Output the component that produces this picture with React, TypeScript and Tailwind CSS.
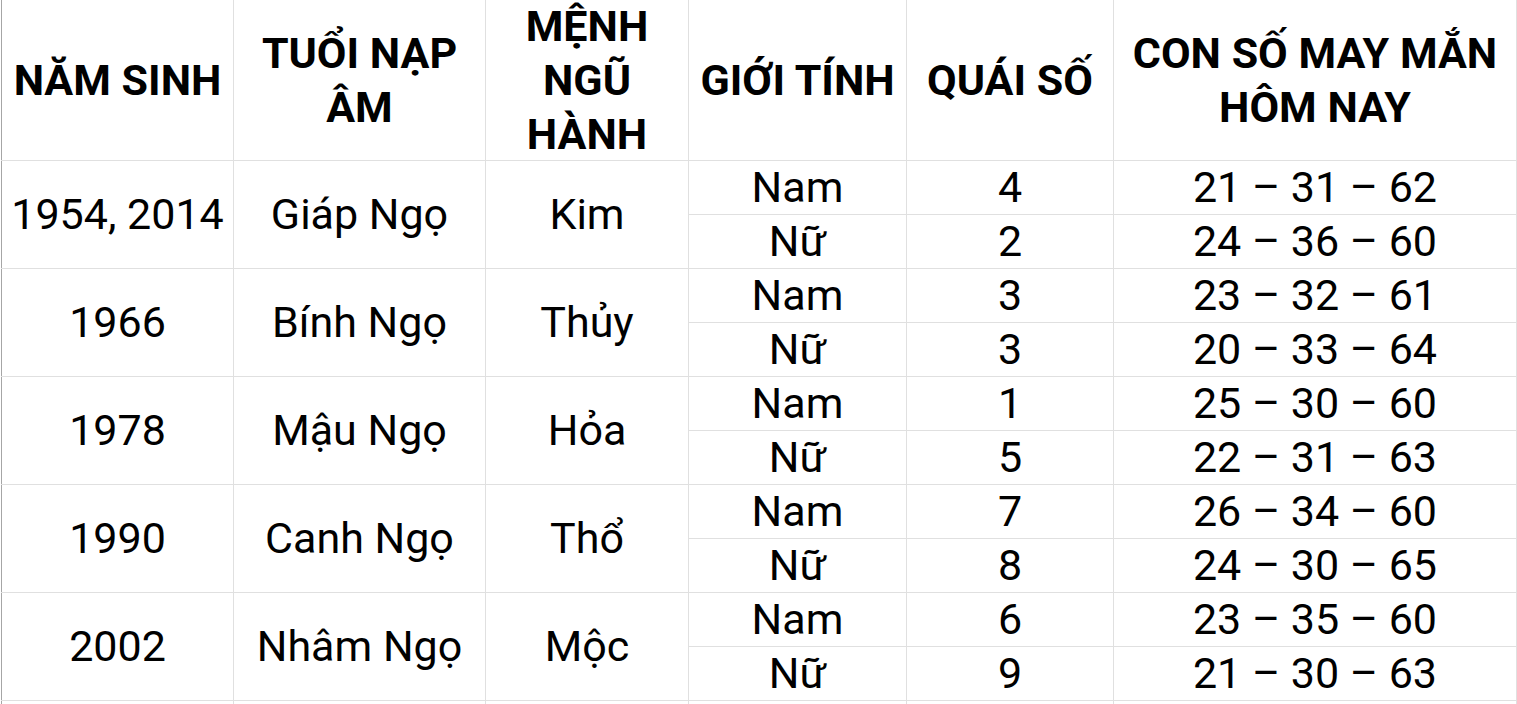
import React from "react";

const data = [
  { year: "1954, 2014", tuoi: "Giáp Ngọ", menh: "Kim", rows: [["Nam", "4", "21 – 31 – 62"], ["Nữ", "2", "24 – 36 – 60"]] },
  { year: "1966", tuoi: "Bính Ngọ", menh: "Thủy", rows: [["Nam", "3", "23 – 32 – 61"], ["Nữ", "3", "20 – 33 – 64"]] },
  { year: "1978", tuoi: "Mậu Ngọ", menh: "Hỏa", rows: [["Nam", "1", "25 – 30 – 60"], ["Nữ", "5", "22 – 31 – 63"]] },
  { year: "1990", tuoi: "Canh Ngọ", menh: "Thổ", rows: [["Nam", "7", "26 – 34 – 60"], ["Nữ", "8", "24 – 30 – 65"]] },
  { year: "2002", tuoi: "Nhâm Ngọ", menh: "Mộc", rows: [["Nam", "6", "23 – 35 – 60"], ["Nữ", "9", "21 – 30 – 63"]] },
];

const th = "border border-[#e0e0e0] border-t-0 text-center align-middle font-bold text-[43px] leading-[54px] text-black p-0";
const td = "border border-[#e0e0e0] text-center align-middle text-[43px] leading-[53px] text-black p-0 h-[54px] whitespace-nowrap";

function H({ children }: { children: React.ReactNode }) {
  return <div className="h-[160px] flex flex-col items-center justify-center overflow-visible">{children}</div>;
}

export default function App() {
  return (
    <div className="h-[704px] w-[1517px] overflow-hidden bg-white" style={{ fontFamily: "Roboto, 'Noto Sans', sans-serif" }}>
      <div className="pl-px">
        <table className="table-fixed border-collapse w-[1515px]">
          <colgroup>
            <col className="w-[232px]" />
            <col className="w-[252px]" />
            <col className="w-[203px]" />
            <col className="w-[218px]" />
            <col className="w-[207px]" />
            <col className="w-[403px]" />
          </colgroup>
          <thead>
            <tr>
              <th className={th + " border-l-[#a6a6a6]"}><H><span className="whitespace-nowrap">NĂM SINH</span></H></th>
              <th className={th}><H><span>TUỔI NẠP</span><span>ÂM</span></H></th>
              <th className={th}><H><span>MỆNH</span><span>NGŨ</span><span>HÀNH</span></H></th>
              <th className={th}><H><span className="whitespace-nowrap">GIỚI TÍNH</span></H></th>
              <th className={th}><H><span className="whitespace-nowrap">QUÁI SỐ</span></H></th>
              <th className={th}><H><span className="whitespace-nowrap">CON SỐ MAY MẮN</span><span>HÔM NAY</span></H></th>
            </tr>
          </thead>
          <tbody>
            {data.map((g) => (
              <React.Fragment key={g.year}>
                <tr>
                  <td rowSpan={2} className={td + " border-l-[#a6a6a6]"}>{g.year}</td>
                  <td rowSpan={2} className={td}>{g.tuoi}</td>
                  <td rowSpan={2} className={td}>{g.menh}</td>
                  <td className={td}>{g.rows[0][0]}</td>
                  <td className={td}>{g.rows[0][1]}</td>
                  <td className={td}>{g.rows[0][2]}</td>
                </tr>
                <tr>
                  <td className={td}>{g.rows[1][0]}</td>
                  <td className={td}>{g.rows[1][1]}</td>
                  <td className={td}>{g.rows[1][2]}</td>
                </tr>
              </React.Fragment>
            ))}
            <tr>
              <td className={td + " border-l-[#a6a6a6]"}>&nbsp;</td>
              <td className={td}>&nbsp;</td>
              <td className={td}>&nbsp;</td>
              <td className={td}>&nbsp;</td>
              <td className={td}>&nbsp;</td>
              <td className={td}>&nbsp;</td>
            </tr>
          </tbody>
        </table>
      </div>
    </div>
  );
}
